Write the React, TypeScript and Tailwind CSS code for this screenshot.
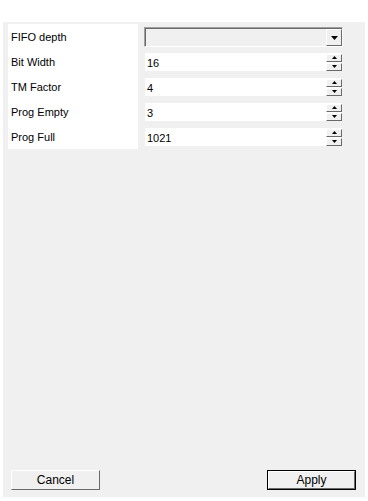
import React from 'react'

const font = { fontFamily: '"Liberation Sans", Arial, sans-serif' }

const rows = [
  { label: 'Bit Width', value: '16' },
  { label: 'TM Factor', value: '4' },
  { label: 'Prog Empty', value: '3' },
  { label: 'Prog Full', value: '1021' },
]

function Arrow({ up }: { up?: boolean }) {
  return (
    <svg width="5" height="3" viewBox="0 0 5 3" className="block">
      {up ? <path d="M2.5 0 L5 3 L0 3 Z" fill="#000" /> : <path d="M0 0 L5 0 L2.5 3 Z" fill="#000" />}
    </svg>
  )
}

function SpinButton({ up }: { up?: boolean }) {
  return (
    <div className="flex h-[8px] w-[16px] items-center justify-center border-t border-l border-t-white border-l-white border-r border-b border-r-[#696969] border-b-[#696969] bg-[#f0f0f0]">
      <Arrow up={up} />
    </div>
  )
}

function SpinInput({ value }: { value: string }) {
  return (
    <div className="flex h-[18px] w-[197px] items-center bg-white">
      <span className="flex-1 pl-[2px] pt-[2px] text-[11px] text-black">{value}</span>
      <div className="flex flex-col gap-px">
        <SpinButton up />
        <SpinButton />
      </div>
    </div>
  )
}

function Combo() {
  return (
    <div className="flex h-[20px] w-[199px] border-t border-l border-t-[#a0a0a0] border-l-[#a0a0a0] border-b border-r border-b-white border-r-white">
      <div className="flex flex-1 border-t border-l border-t-[#696969] border-l-[#696969] bg-[#f0f0f0]">
        <div className="flex-1" />
        <div className="flex w-[16px] items-center justify-center border-t border-l border-t-white border-l-white border-r border-b border-r-[#696969] border-b-[#696969] bg-[#f0f0f0]">
          <svg width="7" height="4" viewBox="0 0 7 4"><path d="M0 0 L7 0 L3.5 4 Z" fill="#000" /></svg>
        </div>
      </div>
    </div>
  )
}

function Button({ children, primary }: { children: React.ReactNode; primary?: boolean }) {
  return (
    <div className={primary ? 'border border-black' : ''}>
      <div className={`flex ${primary ? 'h-[18px] w-[87px]' : 'h-[20px] w-[89px]'} items-center justify-center border-t border-l border-t-white border-l-white border-r border-b border-r-[#696969] border-b-[#696969] bg-[#f0f0f0] text-[12px] text-black`}>
        {children}
      </div>
    </div>
  )
}

export default function App() {
  return (
    <div className="h-[501px] w-[368px] bg-white px-[3px] pt-[22px] pb-[4px]" style={font}>
      <div className="flex h-full flex-col bg-[#f0f0f0]">
        <div className="flex items-start">
          <div className="ml-[5px] mt-[2px] flex h-[125px] w-[130px] flex-col bg-white pl-[3px] pt-[6px] text-[11px] text-black">
            <div className="h-[25px] shrink-0 leading-[15px]">FIFO depth</div>
            {rows.map(r => (
              <div key={r.label} className="h-[25px] shrink-0 leading-[15px]">{r.label}</div>
            ))}
          </div>
          <div className="ml-[6px] mt-[5px] flex flex-col">
            <Combo />
            <div className="ml-px mt-[6px] flex flex-col gap-[7px]">
              {rows.map(r => (
                <SpinInput key={r.label} value={r.value} />
              ))}
            </div>
          </div>
        </div>
        <div className="flex-1" />
        <div className="mb-[7px] flex justify-between pl-[8px] pr-[9px]">
          <Button>Cancel</Button>
          <Button primary>Apply</Button>
        </div>
      </div>
    </div>
  )
}
